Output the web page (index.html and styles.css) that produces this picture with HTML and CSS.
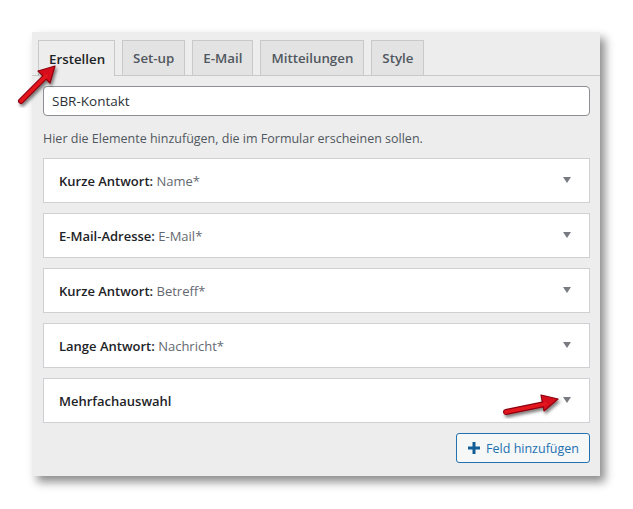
FILE: index.html
```html
<!DOCTYPE html>
<html lang="de">
<head>
<meta charset="utf-8">
<title>Formular erstellen</title>
<link rel="stylesheet" href="styles.css">
</head>
<body>
<div class="panel">
  <div class="tabs">
    <div class="tab active">Erstellen</div>
    <div class="tab">Set-up</div>
    <div class="tab">E-Mail</div>
    <div class="tab">Mitteilungen</div>
    <div class="tab">Style</div>
  </div>
  <div class="content">
    <input class="title-input" type="text" value="SBR-Kontakt">
    <p class="desc">Hier die Elemente hinzufügen, die im Formular erscheinen sollen.</p>
    <div class="fields">
      <div class="field"><span class="label"><b>Kurze Antwort:</b> Name*</span><span class="caret"></span></div>
      <div class="field"><span class="label"><b>E-Mail-Adresse:</b> E-Mail*</span><span class="caret"></span></div>
      <div class="field"><span class="label"><b>Kurze Antwort:</b> Betreff*</span><span class="caret"></span></div>
      <div class="field"><span class="label"><b>Lange Antwort:</b> Nachricht*</span><span class="caret"></span></div>
      <div class="field"><span class="label"><b>Mehrfachauswahl</b></span><span class="caret"></span></div>
    </div>
    <div class="actions">
      <button class="add-btn" type="button">
        <svg class="plus" width="12" height="12" viewBox="0 0 12 12"><rect x="4.5" y="0" width="3" height="12" fill="#135e96"/><rect x="0" y="4.5" width="12" height="3" fill="#135e96"/></svg>
        Feld hinzufügen
      </button>
    </div>
  </div>
</div>
<svg class="arrow arrow-tab" width="50" height="50" viewBox="0 0 50 50">
  <defs>
    <filter id="sh" x="-30%" y="-30%" width="160%" height="160%">
      <feDropShadow dx="1.5" dy="2.5" stdDeviation="1.6" flood-color="#000" flood-opacity="0.5"/>
    </filter>
  </defs>
  <g filter="url(#sh)">
    <line x1="7" y1="43" x2="32" y2="18" stroke="#8e0010" stroke-width="6" stroke-linecap="round"/>
    <polygon points="41,8 24,13 36,25" fill="#d8101c" stroke="#8e0010" stroke-width="1.2" stroke-linejoin="round"/>
    <line x1="7" y1="43" x2="32" y2="18" stroke="#e3141f" stroke-width="3.8" stroke-linecap="round"/>
  </g>
</svg>
<svg class="arrow arrow-field" width="70" height="30" viewBox="0 0 70 30">
  <defs>
    <filter id="sh2" x="-30%" y="-50%" width="160%" height="200%">
      <feDropShadow dx="1.5" dy="2.5" stdDeviation="1.6" flood-color="#000" flood-opacity="0.5"/>
    </filter>
  </defs>
  <g filter="url(#sh2)">
    <line x1="5" y1="23" x2="44" y2="15" stroke="#8e0010" stroke-width="6" stroke-linecap="round"/>
    <polygon points="57,10 40,6 43,22" fill="#d8101c" stroke="#8e0010" stroke-width="1.2" stroke-linejoin="round"/>
    <line x1="5" y1="23" x2="44" y2="15" stroke="#e3141f" stroke-width="3.8" stroke-linecap="round"/>
  </g>
</svg>
</body>
</html>
```

FILE: styles.css
```css
html, body {
  margin: 0;
  padding: 0;
  background: #ffffff;
}
body {
  font-family: "Open Sans", "Noto Sans", "Liberation Sans", sans-serif;
  font-size: 13px;
  color: #1d2327;
  position: relative;
  width: 633px;
  height: 509px;
  overflow: hidden;
  padding: 32px 0 0 32px;
  box-sizing: border-box;
}
.panel {
  width: 568px;
  height: 444px;
  background: #ededed;
  box-shadow: 5px 6px 9px rgba(0, 0, 0, 0.45);
  box-sizing: border-box;
}
.tabs {
  display: flex;
  gap: 7px;
  padding: 8px 0 0 6px;
  border-bottom: 1px solid #c9c9c9;
  height: 35px;
}
.tab {
  height: 35px;
  box-sizing: border-box;
  padding: 0 10px;
  display: flex;
  align-items: center;
  border: 1px solid #c9c9c9;
  border-bottom: none;
  background: #e3e3e3;
  color: #50575e;
  font-weight: 600;
  font-size: 13.3px;
}
.tab.active {
  background: #ededed;
  color: #1d2327;
  height: 36px;
  padding: 0 9px 0 10px;
}
.content {
  padding: 10px 10px 0 11px;
}
.title-input {
  display: block;
  width: 100%;
  height: 30px;
  box-sizing: border-box;
  border: 1px solid #8c8f94;
  border-radius: 4px;
  background: #fff;
  padding: 0 8px;
  font-family: inherit;
  font-size: 13.5px;
  color: #2c3338;
  outline: none;
}
.desc {
  margin: 0;
  height: 42px;
  padding-top: 3px;
  box-sizing: border-box;
  line-height: 39px;
  color: #50575e;
  font-size: 12.5px;
}
.fields {
  display: flex;
  flex-direction: column;
  gap: 10px;
}
.field {
  height: 45px;
  box-sizing: border-box;
  background: #fff;
  border: 1px solid #cfd0d4;
  display: flex;
  align-items: center;
  justify-content: space-between;
  padding: 0 18px 0 15px;
}
.label {
  color: #646970;
  font-size: 13px;
}
.label b {
  color: #1d2327;
  font-weight: 600;
}
.caret {
  width: 0;
  height: 0;
  border-left: 4.5px solid transparent;
  border-right: 4.5px solid transparent;
  border-top: 6px solid #787c82;
  margin-top: -2px;
}
.actions {
  display: flex;
  justify-content: flex-end;
  padding-top: 10px;
}
.add-btn {
  display: flex;
  align-items: center;
  gap: 6px;
  height: 30px;
  box-sizing: border-box;
  padding: 0 10px 0 11px;
  border: 1px solid #2271b1;
  border-radius: 3px;
  background: #f6f7f7;
  color: #2271b1;
  font-family: inherit;
  font-size: 12.5px;
  cursor: pointer;
}
.arrow {
  position: absolute;
}
.arrow-tab {
  left: 14px;
  top: 58px;
}
.arrow-field {
  left: 501px;
  top: 389px;
}
```
